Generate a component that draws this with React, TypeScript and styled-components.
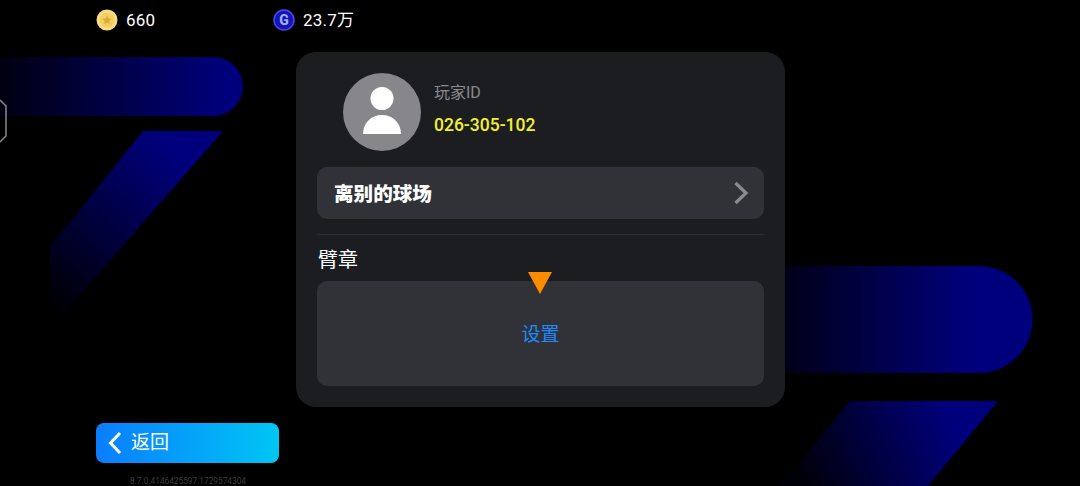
import React from "react";
import styled, { createGlobalStyle } from "styled-components";

const FONT = `Roboto, "Noto Sans CJK SC", sans-serif`;

const Global = createGlobalStyle`
  html, body { margin: 0; padding: 0; background: #000; }
  #root { width: 1080px; height: 486px; overflow: hidden; }
`;

const Page = styled.div`
  position: relative;
  width: 1080px;
  height: 486px;
  padding-left: 96px;
  box-sizing: border-box;
  background: #000;
  overflow: hidden;
  font-family: ${FONT};
  display: flex;
  flex-direction: column;
  align-items: flex-start;
`;

const Backdrop = styled.svg`
  position: absolute;
  inset: 0;
  width: 1080px;
  height: 486px;
`;

const TopBar = styled.div`
  position: relative;
  display: flex;
  align-items: center;
  height: 40px;
`;

const Currency = styled.div<{ $width: number }>`
  display: flex;
  align-items: center;
  gap: 8px;
  width: ${(p) => p.$width}px;
  color: #fff;
  font-size: 17px;
  font-weight: 400;
  line-height: 20px;
  letter-spacing: 0.2px;
`;

const Amount = styled.span`
  display: block;
  height: 20px;
  line-height: 20px;
  overflow: visible;
`;

const Panel = styled.div`
  position: relative;
  width: 489px;
  height: 355px;
  margin: 12px 0 0 200px;
  padding: 21px 21px 0 21px;
  box-sizing: border-box;
  background: #1c1d21;
  border-radius: 20px;
  display: flex;
  flex-direction: column;
`;

const Profile = styled.div`
  display: flex;
  align-items: center;
  gap: 13px;
  padding-left: 26px;
  height: 78px;
`;

const Avatar = styled.svg`
  width: 78px;
  height: 78px;
  flex: none;
`;

const IdColumn = styled.div`
  display: flex;
  flex-direction: column;
  gap: 10px;
  margin-top: -5px;
`;

const IdLabel = styled.div`
  color: #8a8a8f;
  font-size: 16px;
  line-height: 22px;
`;

const IdValue = styled.div`
  color: #f4f02c;
  font-size: 17.5px;
  font-weight: 500;
  line-height: 23px;
`;

const Row = styled.div`
  display: flex;
  align-items: center;
  justify-content: space-between;
  height: 52px;
  margin-top: 16px;
  padding: 0 15px 0 17px;
  background: #313237;
  border-radius: 10px;
`;

const RowTitle = styled.div`
  color: #fff;
  font-size: 19.6px;
  font-weight: 900;
  margin-top: -2px;
`;

const Divider = styled.div`
  height: 1px;
  margin-top: 15px;
  background: #2b2c30;
`;

const SectionTitle = styled.div`
  margin-top: 13px;
  padding-left: 1px;
  color: #fff;
  font-size: 20px;
  line-height: 24px;
  height: 33px;
`;

const BadgeBox = styled.div`
  position: relative;
  height: 105px;
  background: #313237;
  border-radius: 10px;
  display: flex;
  align-items: center;
  justify-content: center;
`;

const Pointer = styled.div`
  position: absolute;
  top: -9px;
  left: 50%;
  margin-left: -13px;
  width: 0;
  height: 0;
  border-left: 12px solid transparent;
  border-right: 12px solid transparent;
  border-top: 22px solid #ff8c00;
`;

const SetLink = styled.div`
  color: #1a8cff;
  font-size: 19px;
  font-weight: 400;
  margin-top: -2px;
`;

const BackButton = styled.div`
  position: relative;
  width: 183px;
  height: 40px;
  margin-top: 16px;
  padding-left: 12px;
  box-sizing: border-box;
  border-radius: 8px;
  background: linear-gradient(90deg, #0a7dff 0%, #00c6f4 100%);
  display: flex;
  align-items: center;
  gap: 9px;
  color: #fff;
  font-size: 19px;
  line-height: 38px;
`;

const Version = styled.div`
  position: relative;
  margin: 13px 0 0 34px;
  color: #3c3c3c;
  font-size: 8.3px;
  line-height: 10px;
  white-space: nowrap;
`;

export default function App() {
  return (
    <Page>
      <Global />
      <Backdrop viewBox="0 0 1080 486">
        <defs>
          <linearGradient id="bar-l" gradientUnits="userSpaceOnUse" x1="0" y1="0" x2="225" y2="0">
            <stop offset="0" stopColor="#000010" />
            <stop offset="1" stopColor="#00007c" />
          </linearGradient>
          <linearGradient id="diag-l" gradientUnits="userSpaceOnUse" x1="55" y1="315" x2="190" y2="170">
            <stop offset="0" stopColor="#000000" />
            <stop offset="1" stopColor="#00007c" />
          </linearGradient>
          <linearGradient id="bar-r" gradientUnits="userSpaceOnUse" x1="770" y1="0" x2="970" y2="0">
            <stop offset="0" stopColor="#000010" />
            <stop offset="1" stopColor="#00007c" />
          </linearGradient>
          <linearGradient id="diag-r" gradientUnits="userSpaceOnUse" x1="800" y1="480" x2="950" y2="420">
            <stop offset="0" stopColor="#000008" />
            <stop offset="1" stopColor="#00007c" />
          </linearGradient>
        </defs>
        <path d="M0 57H213.500A29.500 29.500 0 0 1 213.500 116H0Z" fill="url(#bar-l)" />
        <path d="M143 131H223L60 318H50V247Z" fill="url(#diag-l)" />
        <path d="M770 266H979A53.500 53.500 0 0 1 979 373H770Z" fill="url(#bar-r)" />
        <path d="M850 401H998L928 486H780Z" fill="url(#diag-r)" />
        <path d="M0 100L6 106V136L0 142" fill="none" stroke="#8a8a8f" strokeWidth="1.500" />
      </Backdrop>

      <TopBar>
        <Currency $width={177}>
          <svg width="22" height="22" viewBox="0 0 22 22">
            <circle cx="11" cy="11" r="10.500" fill="#f7dc85" />
            <circle cx="11" cy="11" r="7.500" fill="#f3cf62" />
            <path d="M11 6.500l1.350 2.900 3.150.4-2.300 2.150.6 3.100L11 13.500l-2.800 1.550.6-3.100-2.300-2.150 3.150-.4z" fill="#dca92e" />
          </svg>
          <Amount>660</Amount>
        </Currency>
        <Currency $width={120}>
          <svg width="22" height="22" viewBox="0 0 22 22">
            <circle cx="11" cy="11" r="10" fill="#1414b4" stroke="#4a4af0" strokeWidth="1.500" />
            <text x="11" y="16" textAnchor="middle" fontFamily={FONT} fontSize="14" fontWeight="800" fill="#9fb0ff">G</text>
          </svg>
          <Amount>23.7万</Amount>
        </Currency>
      </TopBar>

      <Panel>
        <Profile>
          <Avatar viewBox="0 0 78 78">
            <circle cx="39" cy="39" r="39" fill="#86868b" />
            <circle cx="39" cy="25.500" r="11.500" fill="#fff" />
            <path d="M20 61C20 50 28 42 39 42S58 50 58 61Z" fill="#fff" />
          </Avatar>
          <IdColumn>
            <IdLabel>玩家ID</IdLabel>
            <IdValue>026-305-102</IdValue>
          </IdColumn>
        </Profile>
        <Row>
          <RowTitle>离别的球场</RowTitle>
          <svg width="16" height="24" viewBox="0 0 16 24">
            <path d="M2.500 2L13 12 2.500 22" fill="none" stroke="#8a8a8f" strokeWidth="3.200" />
          </svg>
        </Row>
        <Divider />
        <SectionTitle>臂章</SectionTitle>
        <BadgeBox>
          <Pointer />
          <SetLink>设置</SetLink>
        </BadgeBox>
      </Panel>

      <BackButton>
        <svg width="14" height="24" viewBox="0 0 14 24">
          <path d="M12 2L2.500 12 12 22" fill="none" stroke="#fff" strokeWidth="3" />
        </svg>
        <span>返回</span>
      </BackButton>
      <Version>8.7.0.4146425597.1729574304</Version>
    </Page>
  );
}
